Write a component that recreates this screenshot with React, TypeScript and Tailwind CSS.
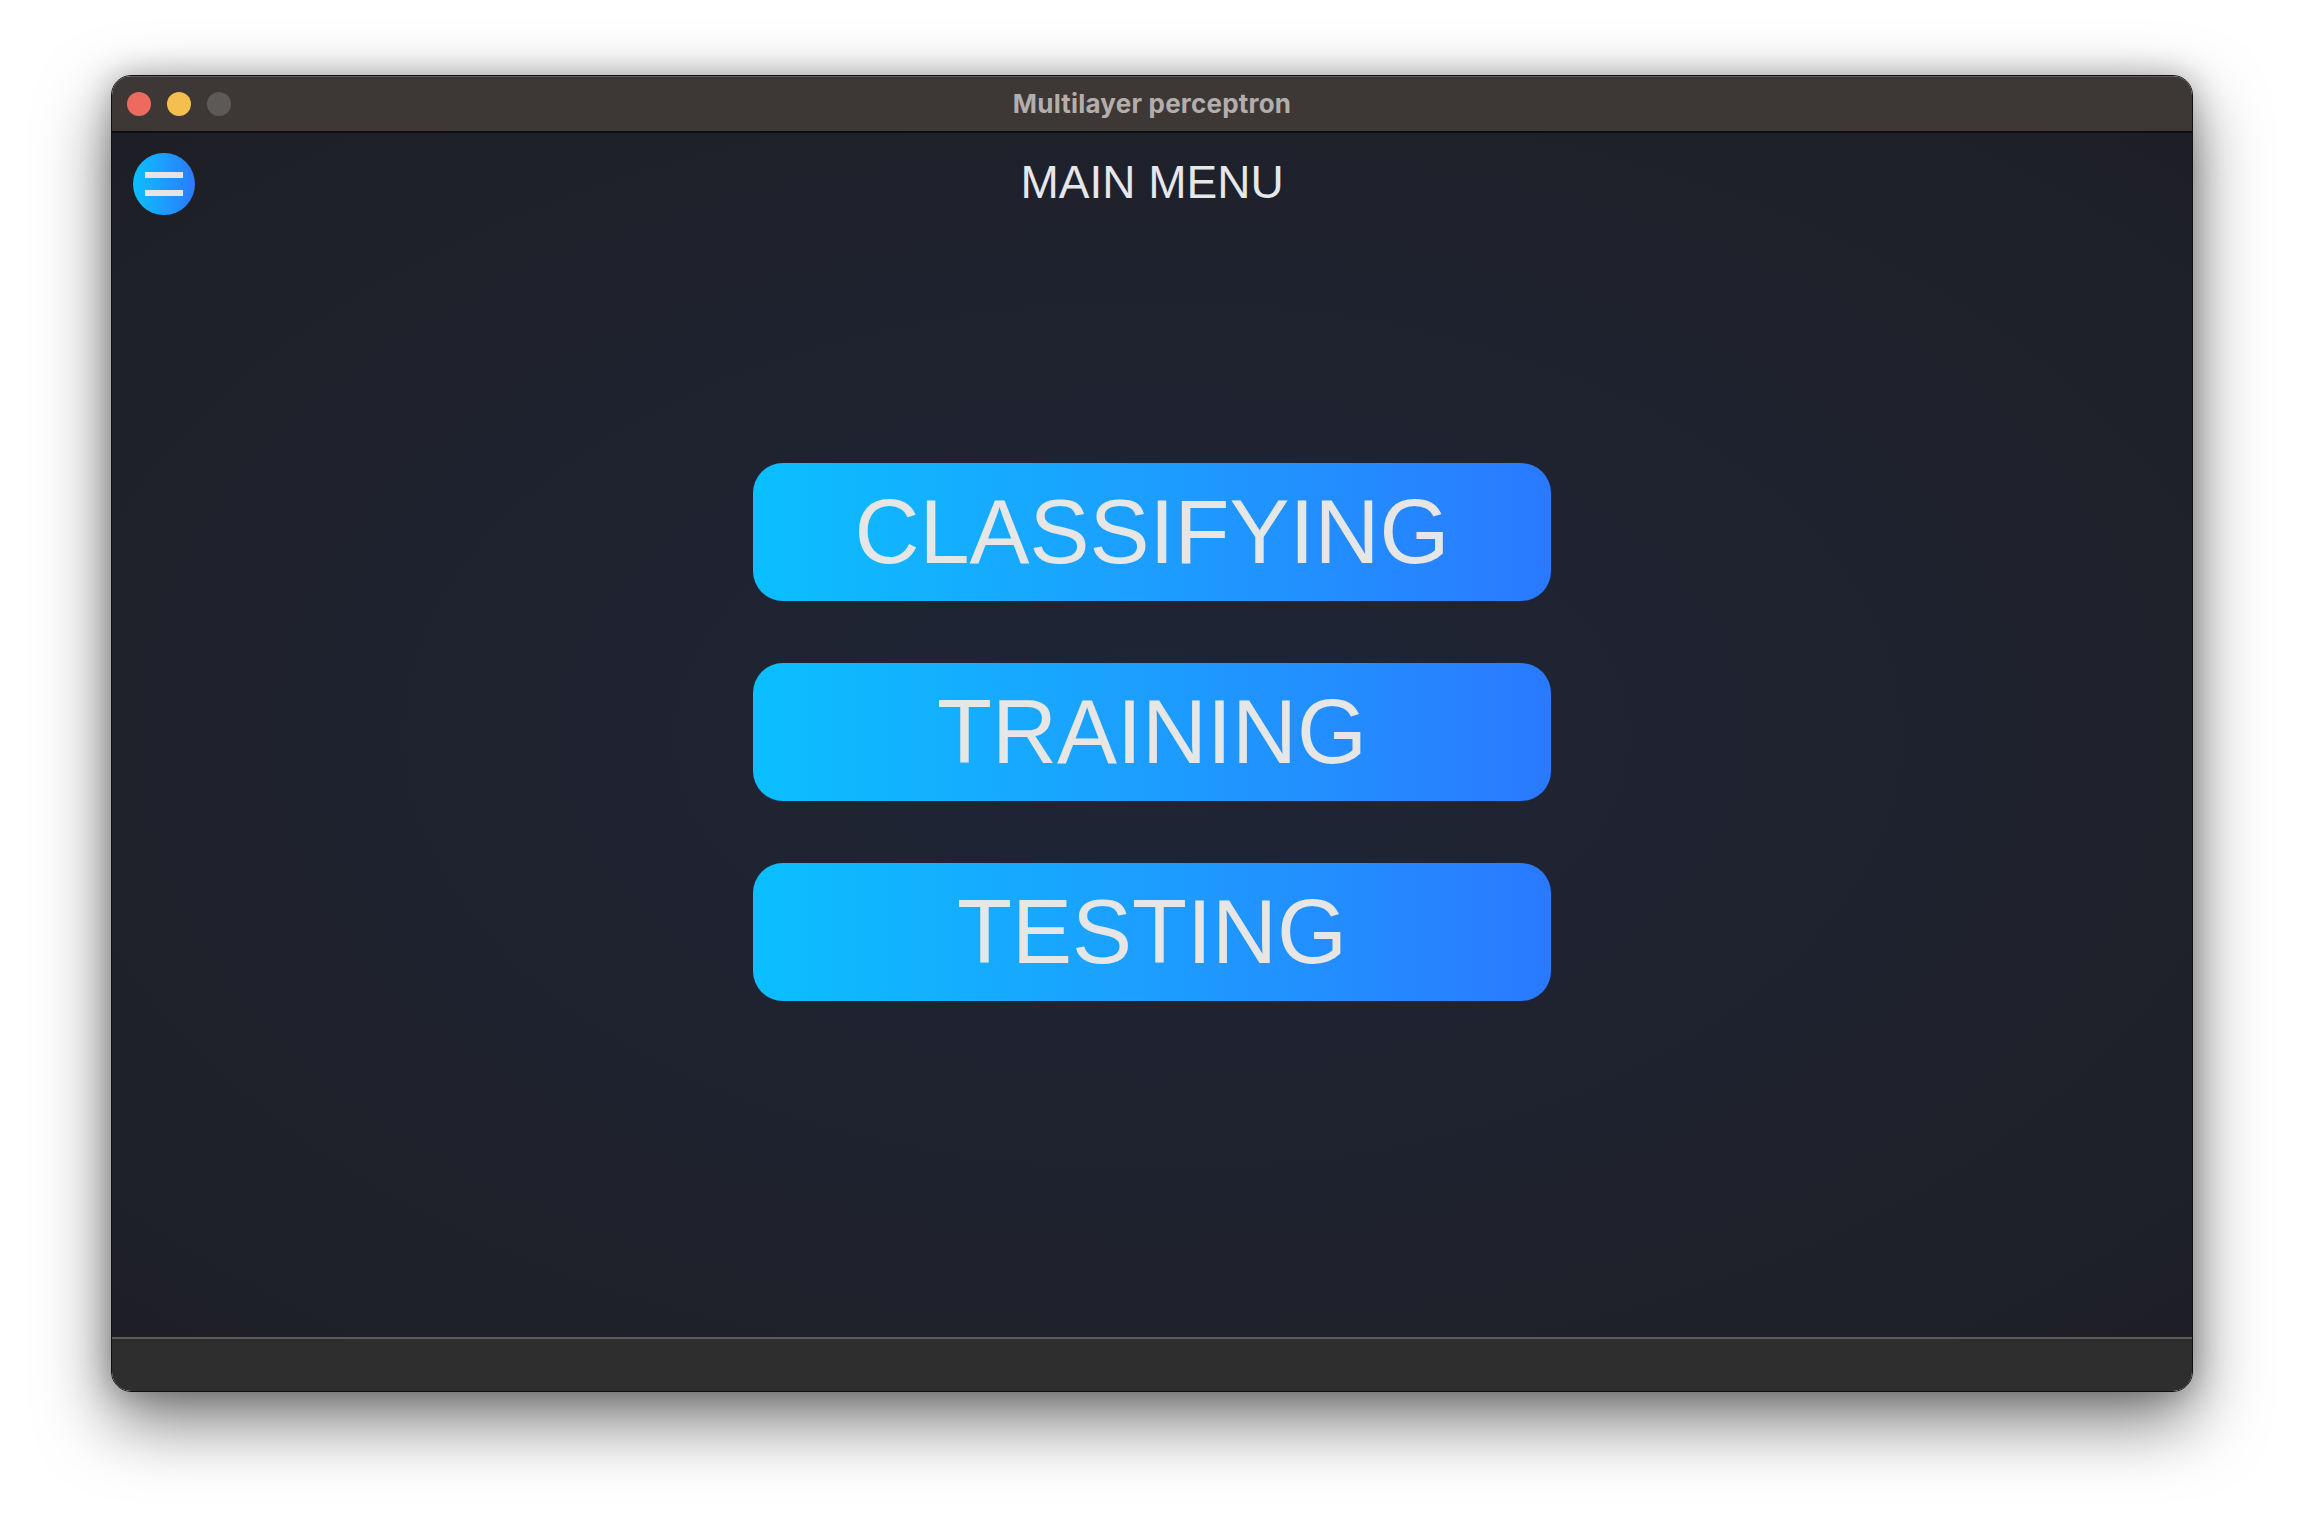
import React from 'react';

const menuItems = ['CLASSIFYING', 'TRAINING', 'TESTING'];

const App: React.FC = () => {
  return (
    <div className="w-[2304px] h-[1540px] bg-white flex justify-center pt-[75px] overflow-hidden">
      {/* Window */}
      <div className="w-[2082px] h-[1317px] flex flex-col rounded-[20px] overflow-hidden border border-[#111] shadow-[0_28px_70px_rgba(0,0,0,0.55),0_0_30px_rgba(0,0,0,0.25)]">
        {/* Title bar */}
        <div className="relative h-[57px] shrink-0 bg-[#3d3836] border-b-2 border-[#0e0e0e] shadow-[inset_0_1px_0_rgba(255,255,255,0.18)] flex items-center justify-center">
          <div className="absolute left-[15px] top-[16px] flex gap-[16px]">
            <span className="w-6 h-6 rounded-full bg-[#ec6a5e]"></span>
            <span className="w-6 h-6 rounded-full bg-[#f4bf4f]"></span>
            <span className="w-6 h-6 rounded-full bg-[#5d5957]"></span>
          </div>
          <span className="text-[26px] font-bold text-[#b3aeab] font-['Inter',sans-serif] tracking-[0.2px]">
            Multilayer perceptron
          </span>
        </div>

        {/* Content */}
        <div className="flex-1 flex flex-col bg-[radial-gradient(ellipse_at_center,#1f2536_0%,#1f2330_45%,#1e1f25_100%)] font-['Liberation_Sans',Arial,sans-serif]">
          <div className="relative pt-[20px] flex justify-center">
            <button className="absolute left-[21px] top-[20px] w-[62px] h-[62px] rounded-full bg-gradient-to-r from-[#0abfff] to-[#2a79ff] flex flex-col items-center justify-center gap-[12px]">
              <span className="w-[38px] h-[6px] bg-[#e5e5e5]"></span>
              <span className="w-[38px] h-[6px] bg-[#e5e5e5]"></span>
            </button>
            <h1 className="mt-[3px] text-[46px] leading-[53px] text-[#e5e7eb]">MAIN MENU</h1>
          </div>

          <div className="mt-[254px] flex flex-col items-center gap-[62px]">
            {menuItems.map((item) => (
              <button
                key={item}
                className="w-[798px] h-[138px] rounded-[30px] bg-gradient-to-r from-[#0abfff] to-[#2a79ff] flex items-center justify-center text-[90px] leading-none text-[#e6e6e6]"
              >
                {item}
              </button>
            ))}
          </div>
        </div>

        {/* Bottom bar */}
        <div className="h-[54px] shrink-0 bg-[#2e2e2e] border-t-2 border-[#5c5c5c]"></div>
      </div>
    </div>
  );
};

export default App;
